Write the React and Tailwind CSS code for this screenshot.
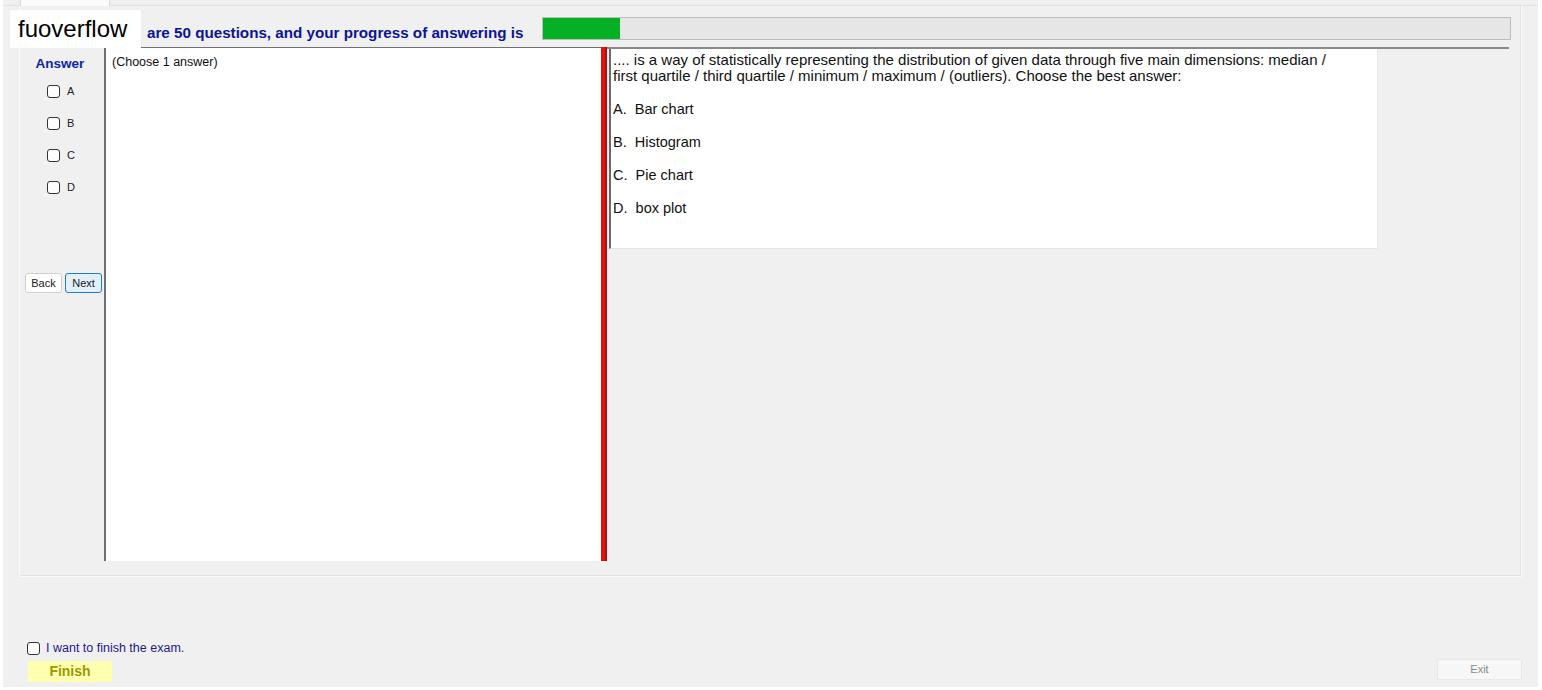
const options = ['A', 'B', 'C', 'D'];

const answers = [
  { key: 'A', text: 'Bar chart' },
  { key: 'B', text: 'Histogram' },
  { key: 'C', text: 'Pie chart' },
  { key: 'D', text: 'box plot' },
];

function Box() {
  return (
    <span className="inline-block w-[13px] h-[13px] rounded-[3px] border border-[#333] bg-white" />
  );
}

export default function App() {
  const progress = 77;

  return (
    <div className="relative w-full h-[690px] bg-white pl-[3px] pr-[4px] pb-[3px] font-['Liberation_Sans',Arial,sans-serif]">
      <div className="h-full flex flex-col bg-[#f0f0f0]">
        {/* tab strip */}
        <div className="h-[6px] flex border-b border-[#e3e3e3]">
          <div className="ml-[17px] w-[90px] h-[6px] bg-[#fbfbfb] border-x border-[#d9d9d9]" />
        </div>

        {/* group box */}
        <div className="mx-[16px] h-[571px] flex flex-col pt-[11px] pl-[4px] pr-[12px] pb-[15px] border border-t-0 border-[#fafafa] shadow-[inset_-1px_-1px_0_#e2e2e2]">
          {/* header */}
          <div className="h-[23px] flex items-center">
            <p className="mt-[8px] ml-[123px] w-[395px] text-[15.2px] leading-4 font-bold text-[#0a1496] whitespace-nowrap">
              are 50 questions, and your progress of answering is
            </p>
            <div className="flex-1 h-[23px] mr-[-2px] bg-[#e6e6e6] border border-[#bcbcbc]">
              <div className="h-full bg-[#06b025]" style={{ width: progress }} />
            </div>
          </div>

          {/* main row */}
          <div className="mt-[7px] flex flex-1">
            {/* answer column */}
            <div className="w-[80px] flex flex-col pt-[9px]">
              <p className="text-center text-[13.5px] font-bold text-[#0b27a8] leading-4 pr-[8px]">Answer</p>
              <div className="mt-[13px] flex flex-col gap-[19px] pl-[23px]">
                {options.map((o) => (
                  <label key={o} className="flex items-center gap-[7px] h-[13px] text-[11px] text-[#222]">
                    <Box />
                    {o}
                  </label>
                ))}
              </div>
              <div className="mt-[79px] flex gap-[3px] pl-[1px]">
                <button className="w-[37px] h-[20px] bg-white border border-[#d0d0d0] rounded-[3px] text-[11px] text-[#222]">
                  Back
                </button>
                <button className="w-[37px] h-[20px] bg-[#e1f0fb] border border-[#1a7fd0] rounded-[3px] text-[11px] text-[#222]">
                  Next
                </button>
              </div>
            </div>

            {/* choose panel */}
            <div className="w-[497px] bg-white border-l-2 border-t border-[#707070] pl-[6px] pt-[6px]">
              <p className="text-[12.5px] text-[#111] leading-4">(Choose 1 answer)</p>
            </div>

            {/* splitter */}
            <div className="w-[6px] bg-[#e3120b] border-r-2 border-[#a0141a]" />

            {/* question panel */}
            <div className="flex-1 border-t-2 border-[#8a8a8a] pl-[2px]">
              <div className="w-[769px] h-[200px] bg-white border-l-2 border-[#6a6a6a] border-r border-b border-r-[#e6e6e6] border-b-[#e6e6e6] pl-[2px] pt-[3px] leading-4 text-[#111]">
                <p className="text-[15px]">
                  .... is a way of statistically representing the distribution of given data through five main dimensions: median /
                  <br />
                  first quartile / third quartile / minimum / maximum / (outliers). Choose the best answer:
                </p>
                {answers.map((a) => (
                  <p key={a.key} className="mt-[17px] whitespace-pre text-[14.5px]">
                    {a.key}.  {a.text}
                  </p>
                ))}
              </div>
            </div>
          </div>
        </div>

        {/* footer */}
        <div className="flex-1 flex items-end justify-between pl-[24px] pr-[16px] pb-[5px]">
          <div className="flex flex-col">
            <label className="flex items-center gap-[6px] text-[12.5px] text-[#1e1a8c]">
              <Box />
              I want to finish the exam.
            </label>
            <button className="mt-[3px] ml-[1px] w-[84px] h-[21px] bg-[#ffffb0] text-[14px] font-bold text-[#9a9a00]">
              Finish
            </button>
          </div>
          <button className="mb-[2px] w-[85px] h-[21px] bg-[#f7f7f7] border border-[#e8e8e8] text-[11px] text-[#8a8a8a]">
            Exit
          </button>
        </div>
      </div>

      {/* watermark */}
      <div className="absolute left-[10px] top-[10px] w-[131px] h-[38px] bg-white flex items-center pl-[8px] text-[24px] text-black">
        fuoverflow
      </div>
    </div>
  );
}
